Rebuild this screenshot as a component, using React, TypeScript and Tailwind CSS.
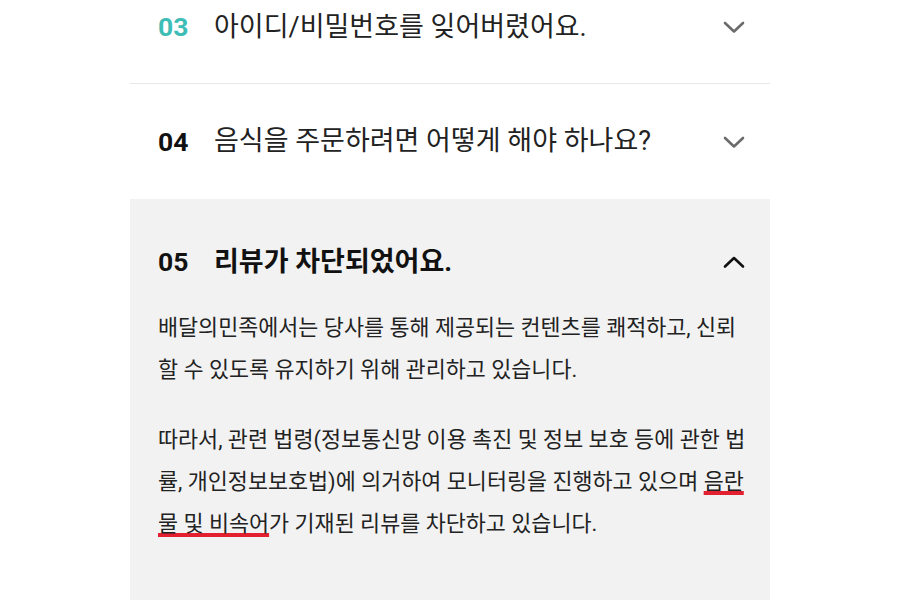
import React from "react";

const font = { fontFamily: 'Roboto, "Noto Sans CJK KR", "Noto Sans", sans-serif' };

function Chevron({ up, dark }: { up?: boolean; dark?: boolean }) {
  return (
    <svg width="24" height="16" viewBox="0 0 24 16" fill="none" className="shrink-0">
      <path
        d={up ? "M3 12.5 L12 4 L21 12.5" : "M3 4 L12 12.5 L21 4"}
        stroke={dark ? "#111111" : "#6b6b6b"}
        strokeWidth="2.6"
        strokeLinecap="round"
        strokeLinejoin="round"
      />
    </svg>
  );
}

function Row({ num, title, numClass, h }: { num: string; title: string; numClass: string; h: string }) {
  return (
    <div className={`flex items-center ${h} pl-[28px] pr-[24px]`}>
      <span className={`w-[56px] text-[26.5px] font-bold ${numClass}`}>{num}</span>
      <span className="flex-1 text-[27px] text-[#222222]">{title}</span>
      <Chevron />
    </div>
  );
}

const ul = "underline decoration-[#e3202f] decoration-[4px] underline-offset-[2px]";

export default function App() {
  return (
    <div className="w-[900px] h-[600px] overflow-hidden bg-white" style={font}>
      <div className="w-[640px] ml-[130px] -mt-[29px]">
        <div className="border-b border-[#e8e8e8]">
          <Row num="03" title="아이디/비밀번호를 잊어버렸어요." numClass="text-[#3dbdb5]" h="h-[112px]" />
        </div>
        <Row num="04" title="음식을 주문하려면 어떻게 해야 하나요?" numClass="text-[#111111]" h="h-[115px]" />
        <div className="bg-[#f2f2f2] pt-[45px] pb-[80px] pl-[28px] pr-[24px]">
          <div className="flex items-center h-[36px]">
            <span className="w-[56px] text-[26.5px] font-bold text-[#111111]">05</span>
            <span className="flex-1 text-[27px] font-bold text-[#111111]">리뷰가 차단되었어요.</span>
            <Chevron up dark />
          </div>
          <div className="mt-[27px] text-[21.8px] leading-[42px] text-[#222222] whitespace-nowrap">
            <p>
              배달의민족에서는 당사를 통해 제공되는 컨텐츠를 쾌적하고, 신뢰
              <br />
              할 수 있도록 유지하기 위해 관리하고 있습니다.
            </p>
            <p className="mt-[28px]">
              따라서, 관련 법령(정보통신망 이용 촉진 및 정보 보호 등에 관한 법
              <br />
              률, 개인정보보호법)에 의거하여 모니터링을 진행하고 있으며 <span className={ul}>음란</span>
              <br />
              <span className={ul}>물 및 비속어</span>가 기재된 리뷰를 차단하고 있습니다.
            </p>
          </div>
        </div>
      </div>
    </div>
  );
}
